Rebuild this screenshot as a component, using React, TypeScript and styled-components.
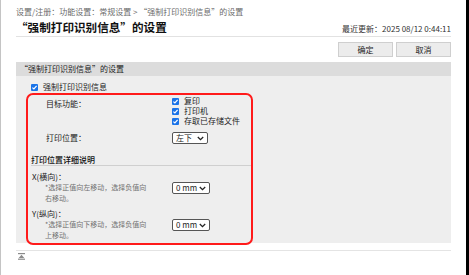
import styled, { createGlobalStyle } from "styled-components";

const GlobalStyle = createGlobalStyle`
  html, body {
    margin: 0;
    padding: 0;
    background: #fff;
  }
  body {
    font-family: "Noto Sans CJK SC", "Noto Sans", sans-serif;
    color: #222;
    font-size: 8px;
  }
`;

type SelectProps = {
  value: string;
  width: number;
};

const Select = ({ value, width }: SelectProps) => (
  <StyledSelect $width={width}>
    <span>{value}</span>
    <svg width="7" height="5" viewBox="0 0 7 5">
      <path d="M0.8 1 L3.5 3.6 L6.2 1" fill="none" stroke="#222" strokeWidth="1.3" />
    </svg>
  </StyledSelect>
);

const Check = ({ label }: { label: string }) => (
  <StyledCheckRow>
    <StyledBox>
      <svg width="7" height="7" viewBox="0 0 7 7">
        <path d="M1.4 3.6 L2.9 5 L5.6 1.8" fill="none" stroke="#fff" strokeWidth="1.2" />
      </svg>
    </StyledBox>
    <span>{label}</span>
  </StyledCheckRow>
);

const App = () => {
  return (
    <StyledFrame>
      <GlobalStyle />
      <StyledBreadcrumb>设置/注册：功能设置：常规设置 &gt; “强制打印识别信息”的设置</StyledBreadcrumb>
      <StyledHeader>
        <StyledTitle>“强制打印识别信息”的设置</StyledTitle>
        <StyledUpdated>最近更新：2025 08/12 0:44:11</StyledUpdated>
      </StyledHeader>
      <StyledButtons>
        <StyledButton>确定</StyledButton>
        <StyledButton>取消</StyledButton>
      </StyledButtons>
      <StyledSectionBar>“强制打印识别信息”的设置</StyledSectionBar>
      <StyledPanel>
        <Check label="强制打印识别信息" />
        <StyledRedBox>
          <StyledFormRow>
            <StyledLabel $top={3}>目标功能：</StyledLabel>
            <div>
              <Check label="复印" />
              <Check label="打印机" />
              <Check label="存取已存储文件" />
            </div>
          </StyledFormRow>
          <StyledFormRow $top={6} $center>
            <StyledLabel>打印位置：</StyledLabel>
            <Select value="左下" width={36} />
          </StyledFormRow>
          <StyledSubHeading>打印位置详细说明</StyledSubHeading>
          <StyledOffsetRow $top={6}>
            <div>
              <StyledOffsetLabel>X(横向)：</StyledOffsetLabel>
              <StyledNote>*选择正值向左移动，选择负值向右移动。</StyledNote>
            </div>
            <Select value="0 mm" width={38} />
          </StyledOffsetRow>
          <StyledOffsetRow $top={5}>
            <div>
              <StyledOffsetLabel>Y(纵向)：</StyledOffsetLabel>
              <StyledNote>*选择正值向下移动，选择负值向上移动。</StyledNote>
            </div>
            <Select value="0 mm" width={38} />
          </StyledOffsetRow>
        </StyledRedBox>
      </StyledPanel>
      <StyledFooter>
        <svg width="7" height="7" viewBox="0 0 7 7">
          <rect x="0" y="0" width="7" height="1.2" fill="#8a8a8a" />
          <path d="M3.5 1.8 L6.3 5 L0.7 5 Z" fill="#8a8a8a" />
          <rect x="0" y="5.6" width="7" height="1.2" fill="#8a8a8a" />
        </svg>
      </StyledFooter>
    </StyledFrame>
  );
};

export default App;

const StyledFrame = styled.div`
  box-sizing: border-box;
  width: 469px;
  height: 275px;
  padding: 0 15px 0 15px;
  border-left: 1px solid #c4c4c4;
  border-right: 3px solid #000;
  overflow: hidden;
`;

const StyledBreadcrumb = styled.div`
  padding-top: 6px;
  height: 11px;
  line-height: 11px;
  color: #6a6a6a;
  font-size: 8px;
  white-space: nowrap;
`;

const StyledHeader = styled.div`
  display: flex;
  justify-content: space-between;
  align-items: flex-end;
  height: 19px;
  border-bottom: 1px solid #e2e2e2;
`;

const StyledTitle = styled.div`
  font-size: 11.6px;
  font-weight: bold;
  line-height: 15px;
  margin-bottom: 1px;
  color: #111;
`;

const StyledUpdated = styled.div`
  font-size: 8px;
  line-height: 11px;
  margin-bottom: 2px;
  color: #333;
`;

const StyledButtons = styled.div`
  display: flex;
  justify-content: flex-end;
  gap: 3px;
  margin-top: 5px;
`;

const StyledButton = styled.button`
  box-sizing: border-box;
  width: 55px;
  height: 15px;
  padding: 0;
  border: 1px solid #cfcfcf;
  background: #ececec;
  font-family: inherit;
  font-size: 8px;
  color: #222;
`;

const StyledSectionBar = styled.div`
  margin-top: 5px;
  height: 14px;
  line-height: 14px;
  padding-left: 4px;
  background: #dcdcdc;
  font-size: 8px;
  color: #222;
`;

const StyledPanel = styled.div`
  box-sizing: border-box;
  height: 167px;
  padding: 6px 0 0 15px;
  background: #eeeeee;
`;

const StyledCheckRow = styled.div`
  display: flex;
  align-items: center;
  gap: 5px;
  height: 10px;
  line-height: 10px;
  font-size: 8px;
  white-space: nowrap;
`;

const StyledBox = styled.span`
  display: inline-flex;
  width: 7px;
  height: 7px;
  border-radius: 1px;
  background: #1a73e8;
`;

const StyledRedBox = styled.div`
  box-sizing: border-box;
  margin: 1px 0 0 -5px;
  width: 227px;
  height: 152px;
  border: 2px solid #ff1a1a;
  border-radius: 7px;
  padding: 1px 0 0 3px;
`;

const StyledFormRow = styled.div<{ $top?: number; $center?: boolean }>`
  display: grid;
  grid-template-columns: 126px auto;
  align-items: ${(p) => (p.$center ? "center" : "start")};
  margin-top: ${(p) => p.$top ?? 0}px;
  padding-left: 15px;
`;

const StyledLabel = styled.div<{ $top?: number }>`
  padding-top: ${(p) => p.$top ?? 0}px;
  line-height: 10px;
  font-size: 8px;
`;

const StyledSelect = styled.div<{ $width: number }>`
  box-sizing: border-box;
  display: flex;
  align-items: center;
  justify-content: space-between;
  width: ${(p) => p.$width}px;
  height: 12px;
  padding: 0 3px 0 3px;
  background: #fff;
  border: 1px solid #555;
  border-radius: 2px;
  font-size: 8px;
  line-height: 10px;
`;

const StyledSubHeading = styled.div`
  margin-top: 11px;
  line-height: 10px;
  font-size: 8px;
  font-weight: 500;
  color: #111;
  border-bottom: 1px solid #cfcfcf;
`;

const StyledOffsetRow = styled.div<{ $top?: number }>`
  display: grid;
  grid-template-columns: 141px auto;
  align-items: center;
  margin-top: ${(p) => p.$top ?? 0}px;
`;

const StyledOffsetLabel = styled.div`
  padding-left: 1px;
  line-height: 10px;
  font-size: 8px;
`;

const StyledNote = styled.div`
  padding-left: 14px;
  width: 104px;
  font-size: 7px;
  line-height: 11px;
  color: #707070;
`;

const StyledFooter = styled.div`
  display: flex;
  margin-top: 7px;
  padding: 2px 0 0 2px;
  border-top: 1px solid #e4e4e4;
`;
